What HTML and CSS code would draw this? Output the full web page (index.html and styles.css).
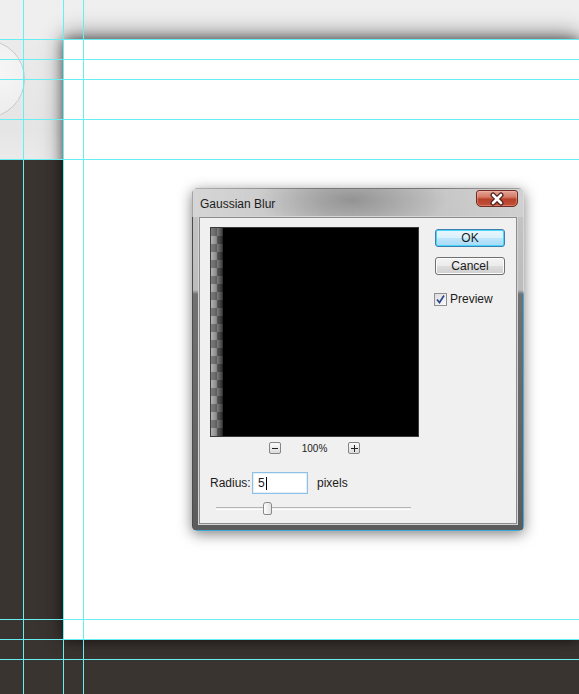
FILE: index.html
```html
<!DOCTYPE html>
<html lang="en">
<head>
  <meta charset="UTF-8">
  <title>Gaussian Blur</title>
  <link rel="stylesheet" href="styles.css">
</head>
<body>
  <div class="workspace">
    <div class="topbar"></div>
    <div class="side">
      <div class="side-panel"><div class="side-knob"></div></div>
    </div>
    <div class="page"></div>
    <div class="bottom"></div>

    <!-- guides -->
    <div class="guides">
      <div class="gv gv-1"></div>
      <div class="gv gv-2"></div>
      <div class="gv gv-3"></div>
      <div class="gh gh-1"></div>
      <div class="gh gh-2"></div>
      <div class="gh gh-3"></div>
      <div class="gh gh-4"></div>
      <div class="gh gh-5"></div>
      <div class="gh gh-6"></div>
      <div class="gh gh-7"></div>
      <div class="gh gh-8"></div>
    </div>

    <div class="dialog">
      <div class="titlebar">
        <span class="title">Gaussian Blur</span>
        <span class="close">
          <svg width="42" height="16" viewBox="0 0 42 16">
            <path d="M17 4 L25 12 M25 4 L17 12" stroke="#4a1f18" stroke-width="5" stroke-linecap="round"/>
            <path d="M17 4 L25 12 M25 4 L17 12" stroke="#fff" stroke-width="2.6" stroke-linecap="round"/>
          </svg>
        </span>
      </div>
      <div class="client">
        <div class="main-col">
          <div class="preview"></div>
          <div class="zoom-row">
            <span class="zoom-btn">
              <svg width="6" height="6" viewBox="0 0 6 6"><path d="M0 3.5 H6" stroke="#222" stroke-width="1"/></svg>
            </span>
            <span class="zoom-pct">100%</span>
            <span class="zoom-btn">
              <svg width="7" height="7" viewBox="0 0 7 7"><path d="M0 3.5 H7 M3.5 0 V7" stroke="#222" stroke-width="1"/></svg>
            </span>
          </div>
          <div class="radius-row">
            <span class="radius-label">Radius:</span>
            <span class="field">5<span class="caret"></span></span>
            <span class="unit">pixels</span>
          </div>
          <div class="slider">
            <div class="track"></div>
            <div class="thumb"></div>
          </div>
        </div>
        <div class="side-col">
          <span class="btn btn-default">OK</span>
          <span class="btn">Cancel</span>
          <span class="check">
            <span class="box">
              <svg width="9" height="9" viewBox="0 0 9 9"><path d="M1 4.5 L3.5 7.5 L8 0.5" fill="none" stroke="#2d4790" stroke-width="1.7"/></svg>
            </span>
            Preview
          </span>
        </div>
      </div>
    </div>
  </div>
</body>
</html>
```

FILE: styles.css
```css
html, body {
  margin: 0;
  padding: 0;
}
body {
  width: 579px;
  height: 694px;
  overflow: hidden;
  background: #3a3431;
  font-family: "Liberation Sans", Arial, sans-serif;
  color: #1b1b1b;
}
.workspace {
  position: relative;
  width: 579px;
  height: 694px;
  display: grid;
  grid-template-columns: 64px 1fr;
  grid-template-rows: 40px 600px 1fr;
  overflow: hidden;
}
.topbar {
  grid-column: 1 / 3;
  background: #efefef;
}
.side {
  display: flex;
  flex-direction: column;
  background: #3a3431;
}
.side-panel {
  height: 119px;
  position: relative;
  overflow: hidden;
  background: linear-gradient(#ebebeb, #e5e5e5 75%, #eaeaea);
}
.side-knob {
  position: absolute;
  left: -53px;
  top: 0;
  width: 76px;
  height: 76px;
  border-radius: 50%;
  border: 1px solid #c9c9c9;
  background: radial-gradient(circle at 65% 40%, #f7f7f7, #ececec 70%);
}
.page {
  position: relative;
  z-index: 1;
  background: #fff;
  box-shadow: 0 -5px 22px rgba(0,0,0,0.45), 0 0 12px rgba(0,0,0,0.55);
}
.bottom {
  grid-column: 1 / 3;
  background: #3a3431;
}

/* --- guides --- */
.guides {
  position: absolute;
  top: 0; left: 0; right: 0; bottom: 0;
  z-index: 2;
  pointer-events: none;
}
.gv, .gh {
  position: absolute;
  background: #66eef0;
}
.gv { top: 0; bottom: 0; width: 1px; }
.gh { left: 0; right: 0; height: 1px; }
.gv-1 { left: 23px; }
.gv-2 { left: 63px; }
.gv-3 { left: 83px; }
.gh-1 { top: 39px; }
.gh-2 { top: 59px; }
.gh-3 { top: 79px; }
.gh-4 { top: 119px; }
.gh-5 { top: 159px; }
.gh-6 { top: 619px; }
.gh-7 { top: 639px; }
.gh-8 { top: 659px; }

/* --- dialog --- */
.dialog {
  position: absolute;
  left: 192px;
  top: 188px;
  width: 332px;
  height: 343px;
  z-index: 3;
  display: flex;
  flex-direction: column;
  border-radius: 6px 6px 5px 5px;
  box-shadow: 0 3px 14px rgba(0,0,0,0.5);
  background:
    linear-gradient(to bottom, #d6d6d6 0, #d6d6d6 30%, #39acdb 31%) right top / 1px 100% no-repeat,
    linear-gradient(#39acdb, #39acdb) left bottom / 100% 1px no-repeat,
    linear-gradient(#4c4c4c, #4c4c4c) left top / 1px 100% no-repeat,
    linear-gradient(#6a6a6a, #6a6a6a) left top / 100% 1px no-repeat,
    linear-gradient(to bottom, #c6c6c6 0, #bcbcbc 102px, #727272 106px, #5c5c5c 100%);
}
.titlebar {
  height: 29px;
  display: flex;
  align-items: flex-start;
  justify-content: space-between;
  border-radius: 6px 6px 0 0;
  background:
    radial-gradient(ellipse 95px 34px at 160px 12px, rgba(120,120,120,0.65), rgba(150,150,150,0)),
    linear-gradient(to right, rgba(225,225,225,0.6), rgba(200,200,200,0.15) 40%, rgba(200,200,200,0.1) 70%, rgba(220,220,220,0.5));
}
.title {
  font-size: 12px;
  padding: 9px 0 0 8px;
  color: #1c1c1c;
}
.close {
  display: block;
  width: 42px;
  height: 17px;
  margin: 2px 6px 0 0;
  box-sizing: border-box;
  border: 1px solid #6e2c22;
  border-radius: 3px 3px 5px 5px;
  background: linear-gradient(#e4a698 0, #d47b66 40%, #b8402a 55%, #c2523a 100%);
  box-shadow: inset 0 0 0 1px rgba(255,200,190,0.35);
  overflow: hidden;
}
.close svg {
  display: block;
  margin: 0 0 0 -1px;
}
.client {
  flex: 1;
  margin: 0 7px 7px 7px;
  display: flex;
  gap: 16px;
  padding: 9px 0 0 10px;
  background: #f0f0f0;
  border: 1px solid #8c8c8c;
  box-shadow: 0 0 0 1px #d4d4d4;
  font-size: 12px;
}
.main-col {
  display: flex;
  flex-direction: column;
  width: 209px;
}
.preview {
  width: 207px;
  height: 208px;
  border: 1px solid #3a3a3a;
  background:
    linear-gradient(to right, rgba(0,0,0,0) 0, rgba(0,0,0,0.15) 4px, rgba(0,0,0,0.55) 10px, rgba(0,0,0,0.85) 13px, #000 17px) 0 0 / 100% 100% no-repeat,
    repeating-conic-gradient(#b0b0b0 0 25%, #7c7c7c 0 50%) 0 0 / 12px 16px repeat-y,
    #000;
}
.zoom-row {
  display: flex;
  align-items: center;
  justify-content: center;
  gap: 21px;
  margin-top: 5px;
  height: 12px;
}
.zoom-btn {
  width: 10px;
  height: 10px;
  display: flex;
  align-items: center;
  justify-content: center;
  border: 1px solid #858585;
  border-radius: 2px;
  background: linear-gradient(#fafafa, #dcdcdc);
}
.zoom-pct {
  font-size: 10px;
  color: #222;
}
.radius-row {
  display: flex;
  align-items: center;
  margin-top: 18px;
  height: 22px;
}
.radius-label {
  width: 42px;
}
.field {
  box-sizing: border-box;
  width: 56px;
  height: 22px;
  display: flex;
  align-items: center;
  padding-left: 5px;
  background: #fff;
  border: 1px solid #8fbfe3;
  box-shadow: inset 0 0 0 1px #e3f0fa;
}
.caret {
  width: 1px;
  height: 13px;
  margin-left: 1px;
  background: #000;
}
.unit {
  margin-left: 9px;
}
.slider {
  position: relative;
  height: 13px;
  margin-top: 8px;
}
.track {
  position: absolute;
  left: 6px;
  top: 5px;
  width: 195px;
  height: 1px;
  border-top: 1px solid #b5b5b5;
  border-bottom: 1px solid #fff;
}
.thumb {
  position: absolute;
  left: 53px;
  top: 0;
  width: 7px;
  height: 11px;
  border: 1px solid #8a8a8a;
  border-radius: 3px 3px 2px 2px;
  background: linear-gradient(to right, #fdfdfd, #e2e2e2);
}
.side-col {
  display: flex;
  flex-direction: column;
  width: 70px;
  padding-top: 2px;
}
.btn {
  box-sizing: border-box;
  height: 18px;
  display: flex;
  align-items: center;
  justify-content: center;
  border: 1px solid #707070;
  border-radius: 3px;
  background: linear-gradient(#f4f4f4 0, #ebebeb 50%, #dddddd 51%, #cfcfcf 100%);
  box-shadow: inset 0 0 0 1px #fcfcfc;
  margin-bottom: 10px;
}
.btn-default {
  border-color: #3c7fb1;
  background: linear-gradient(#eaf6fd 0, #d9f0fc 50%, #bee6fd 51%, #a7d9f5 100%);
  box-shadow: inset 0 0 0 1px #48d6fb;
}
.check {
  display: flex;
  align-items: center;
  gap: 3px;
  margin-top: 7px;
  margin-left: -1px;
}
.box {
  box-sizing: border-box;
  width: 13px;
  height: 13px;
  display: flex;
  align-items: center;
  justify-content: center;
  border: 1px solid #8e8f8f;
  background: linear-gradient(135deg, #dcdcdc, #fbfbfb);
}
```
